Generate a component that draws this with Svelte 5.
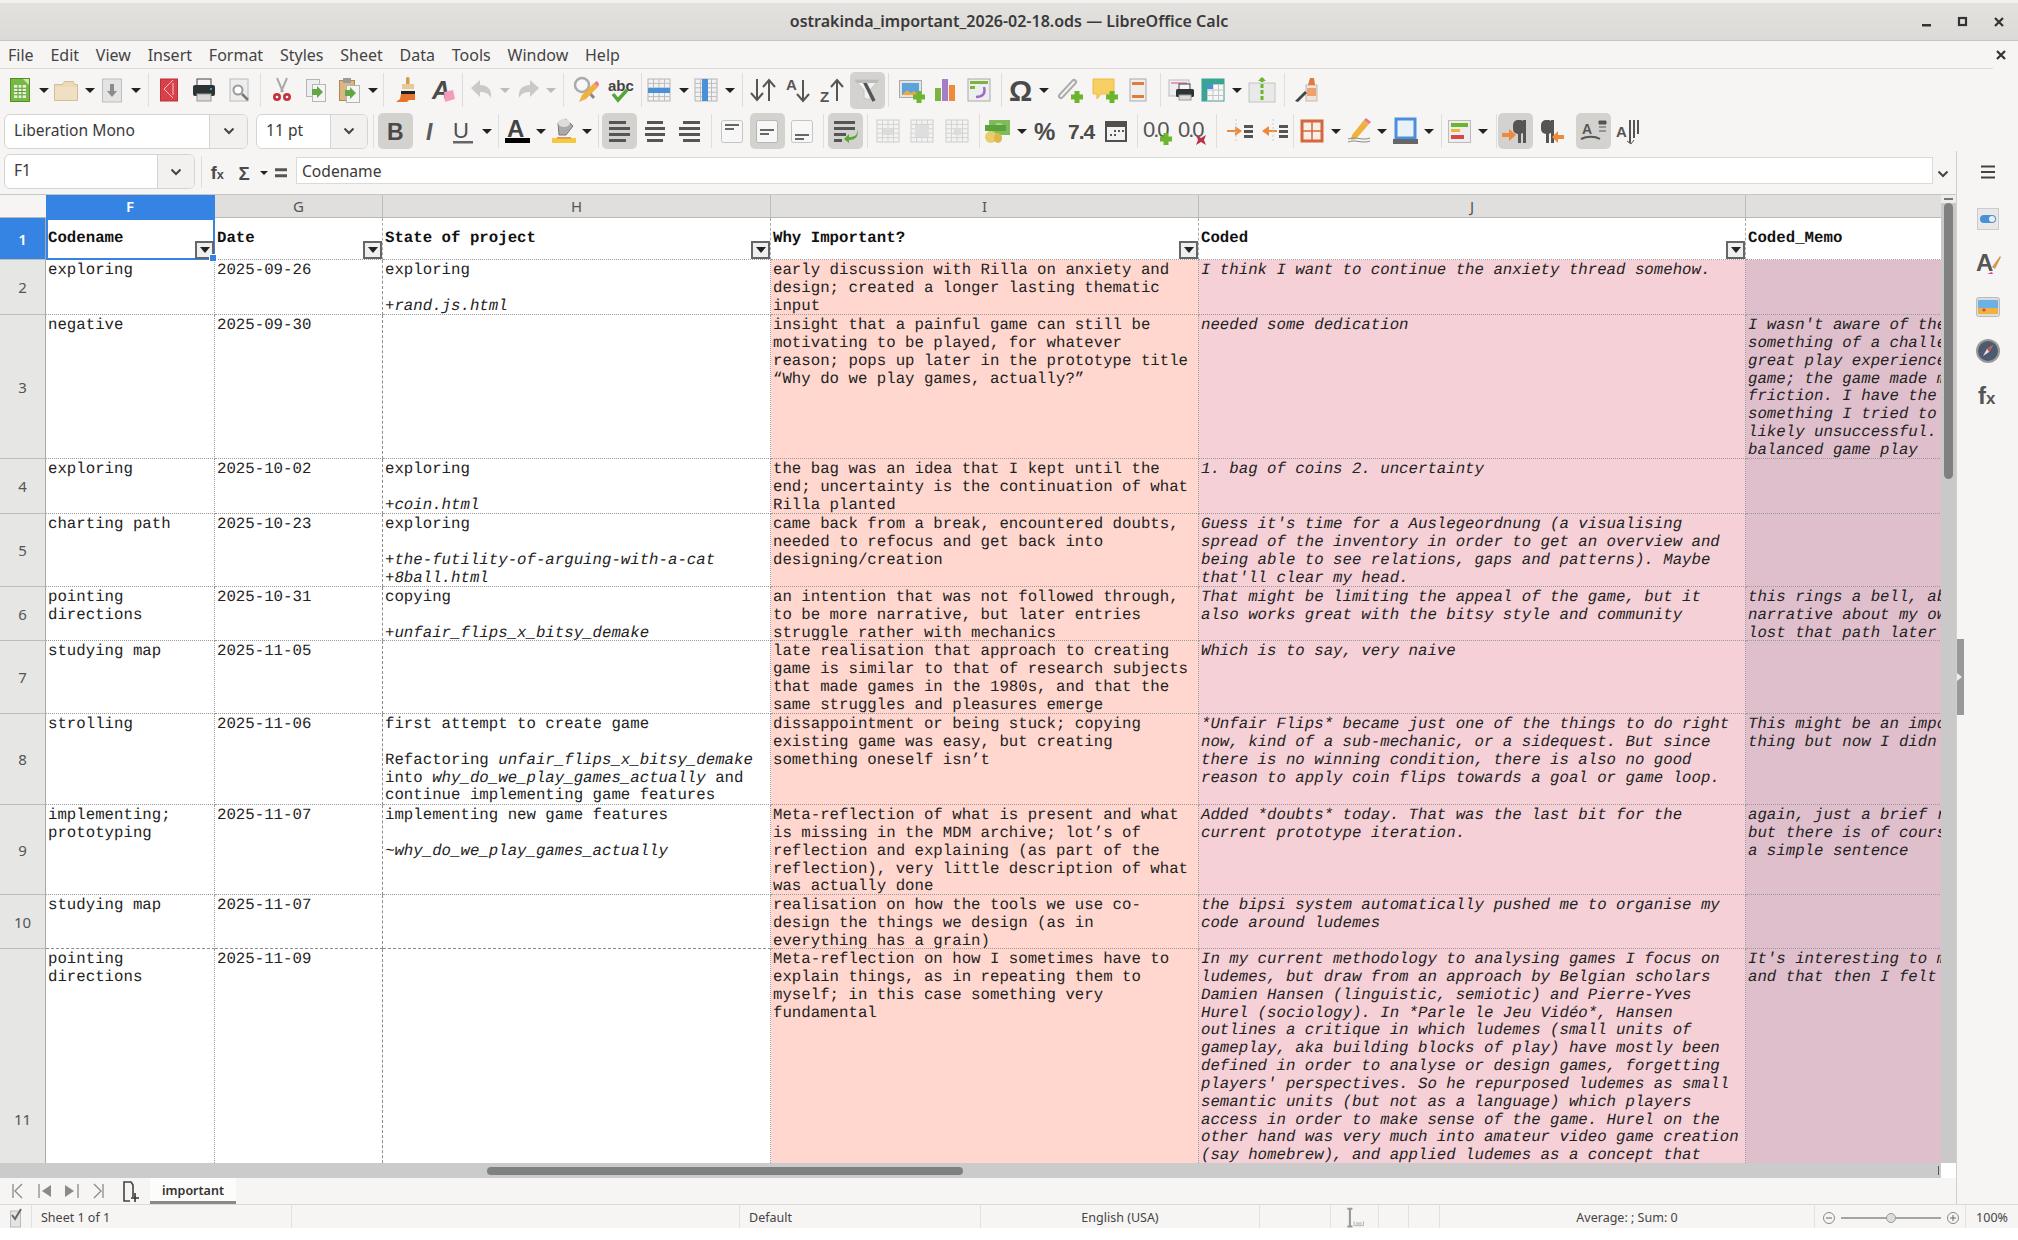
<script>
  // small helpers for the toolbar pictures
  const plus = (x, y, c = '#6bb52f') => `<path d="M${x - 2.5} ${y - 6}h5v3.5h3.5v5h-3.5v3.5h-5v-3.5h-3.5v-5h3.5z" fill="${c}"/>`;
  const cross = (x, y) => `<path d="M${x - 5} ${y - 5}l5 3 5-3-2 5 2 5-5-3-5 3 2-5z" fill="#b8324a"/>`;
  const lines = (x, y, w, h, nx, ny, c) => {
    let d = '';
    for (let i = 1; i < nx; i++) d += `M${x + (w * i) / nx} ${y}v${h}`;
    for (let i = 1; i < ny; i++) d += `M${x} ${y + (h * i) / ny}h${w}`;
    return `<path d="${d}" stroke="${c}" fill="none"/>`;
  };
  const gridbox = (x, y, w, h) => `<rect x="${x}" y="${y}" width="${w}" height="${h}" fill="#f2f2f2" stroke="#b5b5b5"/>` + lines(x, y, w, h, 4, 5, '#bdbdbd');
  const bars = (rows, c = '#555') => rows.map(([x, y, w, h]) => `<rect x="${x}" y="${y}" width="${w}" height="${h || 3}" fill="${c}"/>`).join('');
  const txt = (s, x, y, size, fill, extra = '') => `<text x="${x}" y="${y}" font-size="${size}" fill="${fill}" font-family="Liberation Sans, sans-serif" ${extra}>${s}</text>`;
  const faded = (s) => `<g opacity=".6">${s}</g>`;

  const icons = {
    new: `<rect x="6.5" y="4.5" width="19" height="23" fill="#78b944" stroke="#4e8f2a"/><rect x="10" y="11" width="12" height="13" fill="#e6f2d8"/>` + lines(10, 11, 12, 13, 3, 4, '#5c9a35') + `<path d="M19 5h6v6z" fill="#cfe6b5"/>`,
    open: `<path d="M4.5 10.5h8l2-3h9l1 3h3v16h-23z" fill="#edd9b8" stroke="#d3bd97"/><rect x="5" y="13" width="22" height="13" fill="#f1dfc3"/>`,
    save: `<rect x="6.5" y="5" width="19" height="23" fill="#e4e4e4" stroke="#bcbcbc"/><path d="M14 10h4v7h3l-5 6-5-6h3z" fill="#8b8b8b"/>`,
    pdf: `<rect x="7.5" y="5" width="17" height="22" fill="#d8414a" stroke="#b9333a"/><path d="M20 6l-9 9 9 9M20 9v12" stroke="#f3c8c8" fill="none"/>`,
    print: `<rect x="9" y="5" width="14" height="8" fill="#f5f5f5" stroke="#444"/><rect x="5" y="11" width="22" height="11" rx="2" fill="#2e3436"/><rect x="9" y="20" width="14" height="7" fill="#d9d9d9" stroke="#999"/><rect x="22" y="14" width="2" height="2" fill="#2ba3c7"/>`,
    preview: `<rect x="7" y="5" width="18" height="22" fill="#ededed" stroke="#bbb"/><circle cx="15" cy="16" r="4.5" fill="#fff" stroke="#999" stroke-width="2"/><path d="M19 20l6 6" stroke="#777" stroke-width="2.5"/>`,
    cut: `<path d="M11 4l6 14M21 4l-6 14" stroke="#aaa" stroke-width="2" fill="none"/><circle cx="11" cy="23" r="4" fill="#c4343f"/><circle cx="21" cy="23" r="4" fill="#c4343f"/><circle cx="11" cy="23" r="1.3" fill="#f6f5f4"/><circle cx="21" cy="23" r="1.3" fill="#f6f5f4"/>`,
    copy: `<rect x="6.5" y="5.5" width="13" height="17" fill="#eee" stroke="#b5b5b5"/><rect x="12.5" y="10.5" width="13" height="17" fill="#f5f5f5" stroke="#b5b5b5"/><path d="M12 15h5v-3l6 6-6 6v-3h-5z" fill="#62a744"/>`,
    paste: `<rect x="6.5" y="6.5" width="15" height="20" fill="#d9b77e" stroke="#a98a55"/><rect x="10" y="4" width="8" height="5" fill="#999"/><rect x="13.5" y="11.5" width="13" height="17" fill="#f5f5f5" stroke="#b5b5b5"/><path d="M12 16h5v-3l6 6-6 6v-3h-5z" fill="#62a744"/>`,
    brush: `<rect x="15" y="3" width="3.5" height="8" rx="1.5" fill="#d49a4c"/><rect x="11" y="10" width="12" height="5" fill="#e8c99a"/><rect x="10" y="15" width="14" height="5" fill="#222"/><path d="M10 20h14v6h-6l-2 2h-11l4-3z" fill="#e8732c"/><rect x="10" y="15" width="14" height="2" fill="#eee"/>`,
    clear: txt('A', 6, 25, 25, '#4a4a4a', 'font-weight="700" font-style="italic"') + `<path d="M18 18l9-2 2 9-10 3z" fill="#f39cc0"/>`,
    undo: `<path d="M5 14l9-8v5c8 0 12 5 11 13-2-4-5-6-11-6v5z" fill="#c9c9c9"/>`,
    redo: `<path d="M27 14l-9-8v5c-8 0-12 5-11 13 2-4 5-6 11-6v5z" fill="#c9c9c9"/>`,
    find: `<circle cx="13" cy="11" r="7" fill="#f7f7f7" stroke="#aaa" stroke-width="2.5"/><path d="M18 16l7 8" stroke="#888" stroke-width="3"/><path d="M10 28l3-7 12-12 4 4-12 12z" fill="#eeb23e"/><path d="M25 9l4 4 1-3-2-3z" fill="#e9748f"/>`,
    spell: txt('abc', 5, 17, 15, '#444', 'font-weight="700"') + `<path d="M10 20l5 6 9-10" stroke="#55a63a" stroke-width="3.5" fill="none"/>`,
    rows: gridbox(5, 5, 22, 22) + `<rect x="5" y="14" width="22" height="5" fill="#4a90d9"/>`,
    cols: gridbox(5, 5, 22, 22) + `<rect x="12" y="5" width="6" height="22" fill="#4a90d9"/>`,
    sort: `<path d="M10 5v20M4 19l6 7 6-7M22 27V7M16 13l6-7 6 7" stroke="#555" stroke-width="2" fill="none"/>`,
    asc: txt('A', 3, 16, 15, '#555', 'font-weight="700"') + `<path d="M20 6v20M14 20l6 7 6-7" stroke="#555" stroke-width="2" fill="none"/>`,
    desc: txt('Z', 3, 28, 15, '#555', 'font-weight="700"') + `<path d="M20 27V7M14 13l6-7 6 7" stroke="#555" stroke-width="2" fill="none"/>`,
    filter: `<path d="M4 6h24l-9 10v10l-6-2V16z" fill="#f1f1f1" stroke="#c4c2be"/><path d="M13 7l10 20" stroke="#555" stroke-width="3.5"/><path d="M4 6h24l-2 3H6z" fill="#bbb"/>`,
    image: `<rect x="4.5" y="6.5" width="22" height="17" fill="#e4e4e4" stroke="#aaa"/><rect x="7" y="9" width="17" height="12" fill="#5aa3dc"/><path d="M7 21l5-5 4 3 3-2 5 4z" fill="#f0a83c"/>` + plus(24, 23),
    chart: `<rect x="6" y="14" width="6" height="13" fill="#7cb342"/><rect x="13" y="5" width="6" height="22" fill="#a57dc9"/><rect x="20" y="11" width="6" height="16" fill="#ee8a3a"/>`,
    pivot: `<rect x="5" y="5" width="22" height="22" fill="#eee" stroke="#aaa"/><rect x="7" y="7" width="18" height="3" fill="#7cb342"/><rect x="7" y="12" width="5" height="3" fill="#7cb342"/><path d="M21 13c2 7-2 10-8 10" stroke="#9a6cc8" stroke-width="2.5" fill="none"/>`,
    omega: txt('Ω', 4, 27, 29, '#4a4a4a', 'font-weight="700"'),
    link: `<path d="M7 22L20 8" stroke="#aaa" stroke-width="6" stroke-linecap="round"/><path d="M7 22L20 8" stroke="#f2f2f2" stroke-width="2" stroke-linecap="round"/>` + plus(23, 23),
    comment: `<path d="M5 5h21v15h-13l-4 5v-5h-4z" fill="#f7cf63" stroke="#eebb45"/>` + plus(24, 23),
    header: `<rect x="8" y="5" width="16" height="22" fill="#eee" stroke="#aaa"/><rect x="10" y="8" width="12" height="3" fill="#e07b3a"/><rect x="10" y="21" width="12" height="3" fill="#e07b3a"/>`,
    printarea: `<rect x="2" y="6" width="20" height="16" fill="#eee" stroke="#bbb"/><path d="M4 9h16" stroke="#d48" /><rect x="12" y="10" width="11" height="6" fill="#f5f5f5" stroke="#444"/><rect x="9" y="15" width="18" height="8" rx="1.5" fill="#2e3436"/><rect x="12" y="21" width="12" height="5" fill="#ddd" stroke="#999"/>`,
    freeze: `<rect x="5" y="5" width="22" height="22" fill="#f7f7f7" stroke="#3aa08e"/>` + lines(5, 5, 22, 22, 4, 4, '#c4c4c4') + `<rect x="5" y="5" width="22" height="5" fill="#38a594"/><rect x="5" y="5" width="5" height="22" fill="#38a594"/><rect x="10" y="10" width="6" height="5" fill="#4a90d9"/>`,
    split: `<rect x="3" y="9" width="26" height="19" fill="#e9e9e9" stroke="#c4c4c4"/><path d="M16 4v24" stroke="#6bb52f" stroke-width="3" stroke-dasharray="4 2"/><path d="M16 3l4 4h-8z" fill="#6bb52f"/>`,
    draw: `<rect x="15" y="11" width="11" height="16" fill="#f2e3d6" stroke="#bbb"/><rect x="16" y="14" width="9" height="8" fill="#eea16a"/><path d="M17 11l2-7h4l1 7z" fill="#e5773a"/><path d="M4 27l10-10 2 2-9 9z" fill="#444"/>`,
    bold: txt('B', 8, 25, 23, '#4a4a4a', 'font-weight="700"'),
    italic: txt('I', 12, 25, 23, '#5a5a5a', 'font-weight="700" font-style="italic" font-family="Liberation Serif"'),
    underline: txt('U', 6, 23, 22, '#4f4f4f') + `<rect x="6" y="26" width="20" height="2.5" fill="#666"/>`,
    fontcolor: txt('A', 6, 22, 24, '#444', 'font-weight="700"') + `<rect x="4" y="23" width="25" height="5" fill="#000"/>`,
    highlight: `<rect x="5" y="23" width="24" height="5" fill="#f3c93d"/><path d="M11 8l8-4 7 7-7 9h-7z" fill="#aaa" stroke="#777"/><ellipse cx="17" cy="8" rx="6" ry="4" fill="#ddd"/><path d="M10 22h14v2H10z" fill="#e8985a"/>`,
    left: bars([[6, 6, 17], [6, 12, 21], [6, 18, 21], [6, 24, 17]]),
    center: bars([[8, 6, 16], [6, 12, 20], [6, 18, 20], [8, 24, 16]]),
    right: bars([[9, 6, 17], [5, 12, 21], [5, 18, 21], [9, 24, 17]]),
    vtop: `<rect x="5.5" y="5.5" width="21" height="22" rx="2" fill="#f7f7f7" stroke="#c4c4c4"/>` + bars([[9, 9, 14, 2], [9, 13, 9, 2]], '#666'),
    vmid: `<rect x="5.5" y="5.5" width="21" height="22" rx="2" fill="#f7f7f7" stroke="#b5b5b5"/>` + bars([[9, 14, 14, 2], [9, 18, 9, 2]], '#666'),
    vbot: `<rect x="5.5" y="5.5" width="21" height="22" rx="2" fill="#f7f7f7" stroke="#c4c4c4"/>` + bars([[9, 19, 14, 2], [9, 23, 9, 2]], '#666'),
    wrap: bars([[5, 6, 21], [5, 12, 21], [5, 18, 12], [5, 24, 8]]) + `<path d="M28 14c1 6-2 8-8 8v-3l-5 5 5 4v-3c8 0 10-5 8-11z" fill="#5aa83a"/>`,
    merge1: faded(gridbox(5, 5, 22, 22) + `<rect x="11" y="13" width="10" height="7" fill="#ccc"/>`),
    merge2: faded(gridbox(5, 5, 22, 22) + `<rect x="9" y="10" width="14" height="12" fill="#d0d0d0"/>`),
    merge3: faded(gridbox(5, 5, 22, 22) + `<rect x="13" y="13" width="7" height="7" fill="#ccc"/>`),
    money: `<rect x="8" y="5" width="21" height="15" fill="#7dbb5c"/><circle cx="18" cy="12" r="4" fill="#a8d98c"/><rect x="4" y="10" width="21" height="6" fill="#5aa33a"/><ellipse cx="10" cy="22" rx="6" ry="6" fill="#e8cd6c"/><ellipse cx="17" cy="23" rx="4" ry="5" fill="#d9b94d"/>`,
    percent: txt('%', 3, 25, 24, '#4a4a4a', 'font-weight="700"'),
    number: txt('7.4', 2, 24, 21, '#4a4a4a', 'font-weight="700" letter-spacing="-1"'),
    date: `<rect x="5" y="6" width="22" height="21" fill="#4f4f4f"/><rect x="7" y="12" width="18" height="13" fill="#f2f2f2"/><path d="M14 15h2v2h-2zM18 15h2v2h-2zM22 15h2v2h-2zM10 19h2v2h-2zM14 19h2v2h-2z" fill="#555"/>`,
    decadd: txt('0.0', 1, 22, 22, '#555', 'letter-spacing="-2"') + plus(24, 24),
    decdel: txt('0.0', 1, 22, 22, '#555', 'letter-spacing="-2"') + cross(24, 25),
    indent: `<path d="M5 15h8v-4l7 5-7 5v-4H5z" fill="#ee8a3a"/>` + bars([[22, 10, 9], [22, 15, 9], [22, 20, 9]]) + `<path d="M14 4v24" stroke="#ccc" stroke-dasharray="2 2"/>`,
    outdent: `<path d="M20 15h-8v-4l-7 5 7 5v-4h8z" fill="#ee8a3a"/>` + bars([[22, 10, 9], [22, 15, 9], [22, 20, 9]]) + `<path d="M16 4v24" stroke="#ccc" stroke-dasharray="2 2"/>`,
    borders: `<rect x="6" y="6" width="20" height="20" fill="#f8efe8" stroke="#d4683a" stroke-width="3"/><path d="M16 6v20M6 16h20" stroke="#d4683a" stroke-width="1.5"/>`,
    pencil: `<path d="M9 20L21 5l5 4-13 15-5 1z" fill="#eeb23e"/><path d="M21 5l2-2 5 4-2 2z" fill="#e9748f"/><path d="M5 24c8-3 14 2 22-1M5 27c8-3 14 2 22-1" stroke="#888" fill="none"/>`,
    bordercolor: `<rect x="7" y="4" width="19" height="19" fill="#eaf1fa" stroke="#4a8fdb" stroke-width="3"/><rect x="4" y="24" width="25" height="5" fill="#666"/>`,
    cond: `<rect x="5.5" y="5.5" width="22" height="22" fill="#eee" stroke="#bbb"/><rect x="8" y="8" width="17" height="4" fill="#6bb52f"/><rect x="8" y="14" width="9" height="3" fill="#eeb23e"/><rect x="8" y="20" width="13" height="4" fill="#d4484a"/>`,
    ltr: `<rect x="14" y="5" width="12" height="14" rx="5" fill="#555"/><rect x="19" y="5" width="3" height="23" fill="#555"/><rect x="24" y="5" width="3" height="23" fill="#555"/><path d="M3 18h7v-4l7 6-7 6v-4H3z" fill="#ee8a3a"/>`,
    rtl: `<rect x="6" y="5" width="12" height="14" rx="5" fill="#555"/><rect x="11" y="5" width="3" height="23" fill="#555"/><rect x="16" y="5" width="3" height="23" fill="#555"/><path d="M29 20h-6v-4l-6 6 6 6v-4h6z" fill="#ee8a3a"/>`,
    textv: txt('A', 5, 19, 14, '#555', 'font-weight="700"') + `<path d="M4 24c6-3 14-3 19 0" stroke="#555" stroke-width="2" fill="none"/><path d="M22 6h7v3h-7zM22 12h7M22 16h7" stroke="#555" fill="#555"/>`,
    texth: txt('A', 3, 22, 15, '#555', 'font-weight="700"') + `<path d="M17 5v23M21 5v18M25 5v14" stroke="#555" stroke-width="2"/><path d="M14 26l4 3 3-4" stroke="#555" fill="none"/>`,
    fx: txt('f<tspan font-size="17">x</tspan>', 5, 25, 24, '#4a4a4a', 'font-weight="700"'),
    sum: txt('Σ', 6, 26, 25, '#4a4a4a', 'font-weight="700"'),
    equal: bars([[8, 11, 16, 4], [8, 19, 16, 4]]),
    toggle: `<rect x="5.5" y="5.5" width="21" height="21" fill="#e8e8e8" stroke="#ccc"/><rect x="8" y="12" width="16" height="8" rx="4" fill="#4a90d9"/><circle cx="20" cy="16" r="3" fill="#eee"/>`,
    styles: txt('A', 4, 24, 24, '#555', 'font-weight="700"') + `<path d="M20 20l8-11 1 1-6 12z" fill="#d49a4c"/><path d="M15 27l5-2 1 2z" fill="#d048a0"/>`,
    gallery: `<rect x="4.5" y="6.5" width="23" height="19" rx="2" fill="#dcdcdc" stroke="#bbb"/><rect x="6" y="9" width="20" height="8" fill="#6bb1e3"/><rect x="6" y="17" width="20" height="6" fill="#f0b042"/><circle cx="12" cy="19" r="1.6" fill="#d4484a"/>`,
    navigator: `<circle cx="16" cy="16" r="11" fill="#4e5a6e" stroke="#999" stroke-width="2"/><path d="M11 21l4-7 6-4-4 7z" fill="#e8e8e8"/><path d="M15 14l6-4-4 7z" fill="#d4484a"/>`,
    functions: txt('f<tspan font-size="17">x</tspan>', 6, 25, 24, '#555', 'font-weight="700"')
  };

  const gap = (items, start) => {
    let end = start;
    return items.map(([name, c, on]) => {
      const w = name === 'arrow' || name === 'arrowoff' ? 10 : name === 'sep' ? 1 : 35;
      const m = c - w / 2 - end;
      end = c + w / 2;
      return { name, m, w, on };
    });
  };

  const row1 = gap([
    ['new', 20], ['arrow', 44], ['open', 66], ['arrow', 90], ['save', 112], ['arrow', 136], ['sep', 148],
    ['pdf', 169], ['print', 204], ['preview', 239], ['sep', 260], ['cut', 282], ['copy', 316], ['paste', 349], ['arrow', 373], ['sep', 383],
    ['brush', 407], ['clear', 442], ['sep', 462], ['undo', 482], ['arrowoff', 505], ['redo', 528], ['arrowoff', 551], ['sep', 563],
    ['find', 585], ['spell', 619], ['sep', 641], ['rows', 659], ['arrow', 684], ['cols', 706], ['arrow', 730], ['sep', 742],
    ['sort', 763], ['asc', 799], ['desc', 833], ['filter', 867, true], ['sep', 888], ['image', 911], ['chart', 945], ['pivot', 979], ['sep', 1001],
    ['omega', 1021], ['arrow', 1044], ['link', 1070], ['comment', 1104], ['header', 1138], ['sep', 1160],
    ['printarea', 1183], ['freeze', 1213], ['arrow', 1237], ['split', 1262], ['sep', 1284], ['draw', 1307]
  ], 0);

  const row2 = gap([
    ['sep', 373], ['bold', 395, true], ['italic', 430], ['underline', 463], ['arrow', 487], ['sep', 498],
    ['fontcolor', 517], ['arrow', 541], ['highlight', 563], ['arrow', 587], ['sep', 598],
    ['left', 619, true], ['center', 655], ['right', 690], ['sep', 711], ['vtop', 732], ['vmid', 767, true], ['vbot', 802], ['sep', 823],
    ['wrap', 845, true], ['sep', 867], ['merge1', 888], ['merge2', 922], ['merge3', 957], ['sep', 979],
    ['money', 997], ['arrow', 1022], ['percent', 1047], ['number', 1082], ['date', 1116], ['sep', 1137],
    ['decadd', 1158], ['decdel', 1193], ['sep', 1216], ['indent', 1238], ['outdent', 1273], ['sep', 1293],
    ['borders', 1312], ['arrow', 1336], ['pencil', 1359], ['arrow', 1382], ['bordercolor', 1405], ['arrow', 1429], ['sep', 1441],
    ['cond', 1459], ['arrow', 1483], ['sep', 1496], ['ltr', 1515, true], ['rtl', 1551], ['textv', 1593, true], ['texth', 1629]
  ], 368);

  const menus = ['File', 'Edit', 'View', 'Insert', 'Format', 'Styles', 'Sheet', 'Data', 'Tools', 'Window', 'Help'];
  const sideIcons = ['toggle', 'styles', 'gallery', 'navigator', 'functions'];

  const columns = [
    { name: 'F', title: 'Codename', filter: true, sel: true },
    { name: 'G', title: 'Date', filter: true },
    { name: 'H', title: 'State of project', filter: true },
    { name: 'I', title: 'Why Important?', filter: true },
    { name: 'J', title: 'Coded', filter: true },
    { name: '', title: 'Coded_Memo' }
  ];

  const rows = [
    { n: 2, h: 55, f: 'exploring', g: '2025-09-26', s: 'exploring\n\n<i>+rand.js.html</i>',
      i: 'early discussion with Rilla on anxiety and\ndesign; created a longer lasting thematic\ninput',
      j: 'I think I want to continue the anxiety thread somehow.', k: '' },
    { n: 3, h: 144, f: 'negative', g: '2025-09-30', s: '',
      i: 'insight that a painful game can still be\nmotivating to be played, for whatever\nreason; pops up later in the prototype title\n“Why do we play games, actually?”',
      j: 'needed some dedication',
      k: "I wasn't aware of the extent\nsomething of a challenge\ngreat play experience\ngame; the game made me\nfriction. I have the\nsomething I tried to\nlikely unsuccessful.\nbalanced game play" },
    { n: 4, h: 55, f: 'exploring', g: '2025-10-02', s: 'exploring\n\n<i>+coin.html</i>',
      i: 'the bag was an idea that I kept until the\nend; uncertainty is the continuation of what\nRilla planted',
      j: '1. bag of coins 2. uncertainty', k: '' },
    { n: 5, h: 73, f: 'charting path', g: '2025-10-23', s: 'exploring\n\n<i>+the-futility-of-arguing-with-a-cat</i>\n<i>+8ball.html</i>',
      i: 'came back from a break, encountered doubts,\nneeded to refocus and get back into\ndesigning/creation',
      j: "Guess it's time for a Auslegeordnung (a visualising\nspread of the inventory in order to get an overview and\nbeing able to see relations, gaps and patterns). Maybe\nthat'll clear my head.", k: '' },
    { n: 6, h: 54, f: 'pointing\ndirections', g: '2025-10-31', s: 'copying\n\n<i>+unfair_flips_x_bitsy_demake</i>',
      i: 'an intention that was not followed through,\nto be more narrative, but later entries\nstruggle rather with mechanics',
      j: 'That might be limiting the appeal of the game, but it\nalso works great with the bitsy style and community',
      k: 'this rings a bell, about\nnarrative about my own\nlost that path later' },
    { n: 7, h: 73, f: 'studying map', g: '2025-11-05', s: '',
      i: 'late realisation that approach to creating\ngame is similar to that of research subjects\nthat made games in the 1980s, and that the\nsame struggles and pleasures emerge',
      j: 'Which is to say, very naive', k: '' },
    { n: 8, h: 91, f: 'strolling', g: '2025-11-06', s: 'first attempt to create game\n\nRefactoring <i>unfair_flips_x_bitsy_demake</i>\ninto <i>why_do_we_play_games_actually</i> and\ncontinue implementing game features',
      i: 'dissappointment or being stuck; copying\nexisting game was easy, but creating\nsomething oneself isn’t',
      j: '*Unfair Flips* became just one of the things to do right\nnow, kind of a sub-mechanic, or a sidequest. But since\nthere is no winning condition, there is also no good\nreason to apply coin flips towards a goal or game loop.',
      k: "This might be an important\nthing but now I didn't" },
    { n: 9, h: 90, f: 'implementing;\nprototyping', g: '2025-11-07', s: 'implementing new game features\n\n<i>~why_do_we_play_games_actually</i>',
      i: 'Meta-reflection of what is present and what\nis missing in the MDM archive; lot’s of\nreflection and explaining (as part of the\nreflection), very little description of what\nwas actually done',
      j: 'Added *doubts* today. That was the last bit for the\ncurrent prototype iteration.',
      k: 'again, just a brief reflection\nbut there is of course\na simple sentence' },
    { n: 10, h: 54, f: 'studying map', g: '2025-11-07', s: '', dash: true,
      i: 'realisation on how the tools we use co-\ndesign the things we design (as in\neverything has a grain)',
      j: 'the bipsi system automatically pushed me to organise my\ncode around ludemes', k: '' },
    { n: 11, h: 340, f: 'pointing\ndirections', g: '2025-11-09', s: '',
      i: 'Meta-reflection on how I sometimes have to\nexplain things, as in repeating them to\nmyself; in this case something very\nfundamental',
      j: "In my current methodology to analysing games I focus on\nludemes, but draw from an approach by Belgian scholars\nDamien Hansen (linguistic, semiotic) and Pierre-Yves\nHurel (sociology). In *Parle le Jeu Vidéo*, Hansen\noutlines a critique in which ludemes (small units of\ngameplay, aka building blocks of play) have mostly been\ndefined in order to analyse or design games, forgetting\nplayers' perspectives. So he repurposed ludemes as small\nsemantic units (but not as a language) which players\naccess in order to make sense of the game. Hurel on the\nother hand was very much into amateur video game creation\n(say homebrew), and applied ludemes as a concept that",
      k: "It's interesting to me\nand that then I felt" }
  ];
  const rowTracks = '23px 42px ' + rows.map((r) => r.h + 'px').join(' ');
</script>

{#snippet icon(name, size = 32)}
  <svg class="ic" width={size} height={size} viewBox="0 0 32 32">{@html icons[name]}</svg>
{/snippet}

{#snippet chevron()}
  <svg width="12" height="8" viewBox="0 0 12 8"><path d="M1.5 1.5L6 6l4.5-4.5" stroke="#444" stroke-width="2" fill="none"/></svg>
{/snippet}

{#snippet toolItems(items)}
  {#each items as it}
    {#if it.name === 'arrow' || it.name === 'arrowoff'}
      <span class="arrow" class:off={it.name === 'arrowoff'} style="margin-left:{it.m}px"></span>
    {:else if it.name === 'sep'}
      <span class="sep" style="margin-left:{it.m}px"></span>
    {:else}
      <span class="tool" class:on={it.on} style="margin-left:{it.m}px">{@render icon(it.name, 32)}</span>
    {/if}
  {/each}
{/snippet}

<div class="app">
  <div class="strip"></div>
  <header class="titlebar">
    <div></div>
    <div class="title">ostrakinda_important_2026-02-18.ods — LibreOffice Calc</div>
    <div class="winbtns">
      <svg width="12" height="12" viewBox="0 0 12 12"><rect x="1" y="8" width="9" height="2.5" fill="#333"/></svg>
      <svg width="12" height="12" viewBox="0 0 12 12"><rect x="2" y="2" width="7" height="7" fill="none" stroke="#333" stroke-width="2.2"/></svg>
      <svg width="12" height="12" viewBox="0 0 12 12"><path d="M2 2l8 8M10 2l-8 8" stroke="#333" stroke-width="2.2"/></svg>
    </div>
  </header>

  <nav class="menubar">
    <div class="menus">
      {#each menus as m}<span>{m}</span>{/each}
    </div>
    <svg class="menuclose" width="12" height="12" viewBox="0 0 12 12"><path d="M2 2l8 8M10 2l-8 8" stroke="#333" stroke-width="2.2"/></svg>
  </nav>

  <div class="toolbar one">{@render toolItems(row1)}</div>

  <div class="toolbar two">
    <div class="combo font"><span class="val">Liberation Mono</span><span class="drop">{@render chevron()}</span></div>
    <div class="combo size"><span class="val">11 pt</span><span class="drop">{@render chevron()}</span></div>
    {@render toolItems(row2)}
  </div>

  <div class="middle">
    <div class="sheet">
      <div class="formula">
        <div class="combo name"><span class="val">F1</span><span class="drop">{@render chevron()}</span></div>
        <span class="fsep"></span>
        <span class="ftool">{@render icon('fx', 24)}</span>
        <span class="ftool sum">{@render icon('sum', 24)}</span>
        <span class="arrow small"></span>
        <span class="ftool eq">{@render icon('equal', 24)}</span>
        <div class="input">Codename</div>
        <span class="fdrop">{@render chevron()}</span>
      </div>

      <div class="gridwrap">
        <div class="gridclip">
          <div class="grid" style="grid-template-rows:{rowTracks}">
            <div class="corner"></div>
            {#each columns as c}
              <div class="colhead" class:sel={c.sel}>{c.name}</div>
            {/each}

            <div class="rowhead sel">1</div>
            {#each columns as c}
              <div class="cell head" class:cursor={c.sel}>
                {c.title}
                {#if c.filter}
                  <span class="fbtn"><span></span></span>
                {/if}
                {#if c.sel}<span class="handle"></span>{/if}
              </div>
            {/each}

            {#each rows as r}
              <div class="rowhead">{r.n}</div>
              <div class="cell" class:dash={r.dash}>{r.f}</div>
              <div class="cell vdash" class:dash={r.dash}>{r.g}</div>
              <div class="cell" class:dash={r.dash}>{@html r.s}</div>
              <div class="cell salmon">{r.i}</div>
              <div class="cell pink it">{r.j}</div>
              <div class="cell mauve it">{r.k}</div>
            {/each}
          </div>
        </div>
        <div class="vscroll">
          <div class="vtopcap"><span></span></div>
          <div class="vtrack"><div class="vthumb"></div></div>
        </div>
      </div>

      <div class="hscroll"><div class="hthumb"></div><span class="htick"></span></div>

      <div class="tabs">
        <svg class="tabnav" width="100" height="20" viewBox="0 0 100 20">
          <path d="M9 3v14M18 3l-7 7 7 7" stroke="#8a8a8a" stroke-width="1.3" fill="none"/>
          <path d="M35 3v14" stroke="#8a8a8a" stroke-width="1.3"/><path d="M47 4l-9 6 9 6z" fill="#8a8a8a"/>
          <path d="M61 4l9 6-9 6z" fill="#8a8a8a"/><path d="M74 3v14" stroke="#8a8a8a" stroke-width="1.3"/>
          <path d="M90 3l7 7-7 7M99 3v14" stroke="#8a8a8a" stroke-width="1.3" fill="none"/>
        </svg>
        <svg class="newtab" width="20" height="24" viewBox="0 0 20 24">
          <path d="M12 17v-12l-2-3H3v19h6" stroke="#444" stroke-width="1.6" fill="none"/>
          <path d="M14 13v9M10 18h8" stroke="#333" stroke-width="1.6"/>
        </svg>
        <div class="tab">important</div>
      </div>
    </div>

    <aside class="sidebar">
      <svg class="burger" width="18" height="16" viewBox="0 0 18 16"><path d="M2 2.5h14M2 8h14M2 13.5h14" stroke="#444" stroke-width="2"/></svg>
      {#each sideIcons as s}
        {@render icon(s, 32)}
      {/each}
      <div class="grip"><span></span></div>
    </aside>
  </div>

  <footer class="status">
    <div class="st mid" style="width:32px">
      <svg width="14" height="20" viewBox="0 0 14 20"><rect x="1.5" y="3" width="10" height="16" fill="#e4e4e4" stroke="#bbb"/><path d="M3 7l3 4 6-10" stroke="#666" stroke-width="2" fill="none"/></svg>
    </div>
    <div class="st pad" style="width:260px">Sheet 1 of 1</div>
    <div class="st" style="width:448px"></div>
    <div class="st pad" style="width:241px">Default</div>
    <div class="st mid" style="width:279px">English (USA)</div>
    <div class="st" style="width:71px"></div>
    <div class="st mid" style="width:48px">
      <svg width="26" height="22" viewBox="0 0 26 26"><path d="M7 2v21M4 2h6M4 23h6" stroke="#999" stroke-width="2.5" fill="none"/><path d="M12 17v5h11v-5" stroke="#aaa" fill="none"/><rect x="14" y="18" width="7" height="3" fill="#ccc"/></svg>
    </div>
    <div class="st" style="width:30px"></div>
    <div class="st" style="width:31px"></div>
    <div class="st mid" style="width:375px">Average: ; Sum: 0</div>
    <div class="st zoom" style="width:151px">
      <svg width="150" height="20" viewBox="0 0 150 20">
        <circle cx="14" cy="10" r="5.5" fill="none" stroke="#888"/><path d="M11 10h6" stroke="#666"/>
        <path d="M26 10h100" stroke="#888" stroke-width="1.4"/>
        <circle cx="76" cy="10" r="4.5" fill="#ddd" stroke="#999"/>
        <circle cx="138" cy="10" r="5.5" fill="none" stroke="#888"/><path d="M135 10h6M138 7v6" stroke="#666"/>
      </svg>
    </div>
    <div class="st mid last">100%</div>
  </footer>
</div>

<style>
  :global(body) { margin: 0; background: #fff; }
  .app { width: 2018px; height: 1240px; display: flex; flex-direction: column; overflow: hidden; font-family: "Noto Sans", sans-serif; color: #333; background: #fff; }
  .strip { height: 3px; background: #f2f1ef; }
  .titlebar { height: 37px; display: grid; grid-template-columns: 1fr auto 1fr; align-items: center; background: linear-gradient(#e3e2df, #dcdad7); border-bottom: 1px solid #c9c7c3; box-sizing: content-box; }
  .title { font-size: 16px; font-weight: 600; color: #3a3a3a; margin-top: -2px; }
  .winbtns { display: flex; justify-content: flex-end; gap: 24px; padding-right: 13px; }
  .menubar { height: 28px; flex: none; display: flex; align-items: center; background: #f6f5f4; position: relative; }
  .menus { width: 1993px; height: 28px; display: flex; align-items: center; gap: 16.8px; padding-left: 8px; box-sizing: border-box; font-size: 16px; border-bottom: 1px solid #dcdbd9; color: #444; }
  .menuclose { margin-left: 2px; }
  .toolbar { display: flex; align-items: center; background: #f6f5f4; flex: none; }
  .toolbar.one { height: 42px; }
  .toolbar.two { height: 40px; }
  .tool { width: 35px; height: 36px; display: flex; align-items: center; justify-content: center; flex: none; border-radius: 5px; }
  .tool.on { background: #d4d2cf; }
  .toolbar.one .tool.on { height: 37px; }
  .arrow { width: 0; height: 0; flex: none; box-sizing: content-box; border-left: 5px solid transparent; border-right: 5px solid transparent; border-top: 5px solid #222; }
  .arrow.off { border-top-color: #bbb; }
  .sep { width: 1px; height: 34px; background: #dfdedc; flex: none; }
  .combo { height: 35px; display: flex; align-items: center; background: #fff; border: 1px solid #d5d4d2; border-radius: 6px; box-sizing: border-box; flex: none; overflow: hidden; font-size: 15.6px; color: #3a3a3a; }
  .combo .val { flex: 1; padding-left: 9px; white-space: nowrap; margin-top: -3px; }
  .drop { width: 37px; height: 100%; display: flex; align-items: center; justify-content: center; background: #f2f1ef; border-left: 1px solid #d5d4d2; }
  .combo.font { width: 244px; margin-left: 4px; }
  .combo.size { width: 112px; margin-left: 8px; }
  .combo.size .drop { width: 36px; }
  .middle { flex: 1; display: flex; min-height: 0; }
  .sheet { width: 1956px; display: flex; flex-direction: column; border-right: 1px solid #cfcfcf; box-sizing: content-box; flex: none; }
  .formula { height: 44px; flex: none; display: flex; align-items: center; background: #f6f5f4; border-bottom: 1px solid #c6c6c4; box-sizing: border-box; padding-top: 2px; }
  .combo.name { width: 191px; margin-left: 4px; margin-bottom: 4px; }
  .combo.name .drop { width: 36px; }
  .fsep { width: 1px; height: 32px; background: #dfdedc; margin: 0 0 4px 6px; }
  .ftool { display: flex; margin-left: 5px; margin-bottom: 4px; }
  .ftool.sum { margin-left: 3px; }
  .ftool.eq { margin-left: 1px; }
  .arrow.small { margin: 0 0 2px 2px; border-left-width: 4px; border-right-width: 4px; border-top-width: 4px; }
  .input { width: 1637px; height: 27px; margin: 0 0 6px 3px; box-sizing: border-box; display: flex; align-items: center; padding-left: 5px; background: #fff; border: 1px solid #dbdad8; font-size: 15.6px; color: #3a3a3a; }
  .fdrop { margin-left: 4px; display: flex; }
  .gridwrap { flex: 1; display: flex; min-height: 0; }
  .gridclip { width: 1941px; overflow: hidden; background: #fff; }
  .grid { display: grid; grid-template-columns: 46px 169px 168px 388px 428px 547px 600px; width: 2346px; }
  .corner { background: #f6f5f4; border-bottom: 1px solid #b9b9b7; box-sizing: border-box; }
  .colhead { box-sizing: border-box; display: flex; align-items: center; justify-content: center; background: #e0dfdd; border-right: 1px solid #bdbdbb; border-bottom: 1px solid #b9b9b7; font-size: 15px; color: #555; }
  .colhead.sel { background: #3584e4; color: #fff; font-weight: 600; border-color: #3584e4; }
  .rowhead { box-sizing: border-box; display: flex; align-items: center; justify-content: center; background: #e6e6e4; border-right: 1px solid #a9a9a9; border-bottom: 1px solid #bdbdbb; font-size: 15px; color: #555; }
  .rowhead.sel { background: #3584e4; color: #fff; font-weight: 600; }
  .cell { position: relative; box-sizing: border-box; padding: 2px 0 0 2px; font-family: "Liberation Mono", monospace; font-size: 15.72px; line-height: 17.85px; white-space: pre; overflow: hidden; color: #222; text-rendering: geometricPrecision; background: #fff; border-right: 1px dotted #9a9a9a; border-bottom: 1px dotted #9a9a9a; }
  .cell.vdash { border-right: 1px dashed #8c8c8c; }
  .cell.dash { border-bottom: 1px dashed #8c8c8c; }
  .cell.head { font-weight: 700; padding-top: 12px; color: #111; overflow: visible; border-right: 1px dashed #aaa; white-space: nowrap; }
  .cell.cursor { outline: 2px solid #3584e4; outline-offset: -2px; z-index: 2; }
  .salmon { background: #ffd7ce; }
  .pink { background: #f5d0d6; }
  .mauve { background: #e0bfcc; }
  .it { font-style: italic; }
  .fbtn { position: absolute; right: 0; bottom: 0; width: 19px; height: 18px; box-sizing: border-box; background: #efefef; border: 2px solid #666; display: flex; align-items: center; justify-content: center; }
  .fbtn span { width: 0; height: 0; border-left: 5px solid transparent; border-right: 5px solid transparent; border-top: 6px solid #222; }
  .handle { position: absolute; right: -3px; bottom: -3px; width: 6px; height: 6px; background: #3584e4; border: 1px solid #fff; z-index: 3; }
  .vscroll { width: 15px; flex: none; display: flex; flex-direction: column; background: #c9c9c9; overflow: hidden; }
  .vtopcap { height: 8px; flex: none; background: #ececea; display: flex; justify-content: center; align-items: center; }
  .vtopcap span { width: 9px; height: 2px; background: #777; }
  .vtrack { flex: 1; padding: 0 3px; }
  .vthumb { height: 276px; background: #808080; border-radius: 5px; }
  .hscroll { height: 15px; width: 1941px; flex: none; background: #cbcbcb; position: relative; display: flex; align-items: center; }
  .hthumb { width: 476px; height: 8px; margin-left: 487px; background: #7f8080; border-radius: 4px; }
  .htick { position: absolute; left: 1938px; top: 3px; width: 1px; height: 9px; background: #555; }
  .tabs { height: 26px; flex: none; display: flex; align-items: flex-start; background: #f6f5f4; }
  .tabnav { margin: 3px 0 0 4px; }
  .newtab { margin: 2px 0 0 17px; }
  .tab { width: 86px; height: 26px; margin-left: 9px; box-sizing: border-box; display: flex; align-items: center; justify-content: center; padding-top: 1px; background: #fcfcfb; border-bottom: 3px solid #8a8a8a; font-size: 12.5px; font-weight: 600; color: #333; }
  .sidebar { flex: 1; position: relative; display: flex; flex-direction: column; align-items: center; gap: 12px; padding-top: 13px; background: #f6f5f4; box-sizing: border-box; }
  .burger { margin-bottom: 11px; }
  .grip { position: absolute; left: 0; top: 488px; width: 7px; height: 76px; background: #999; display: flex; align-items: center; }
  .grip span { width: 0; height: 0; border-top: 4px solid transparent; border-bottom: 4px solid transparent; border-left: 5px solid #eee; }
  .status { height: 24px; flex: none; display: flex; margin-bottom: 12px; background: #f6f5f4; border-top: 1px solid #dbdad8; box-sizing: border-box; font-size: 12.5px; color: #444; }
  .st { height: 100%; box-sizing: border-box; display: flex; align-items: center; border-right: 1px solid #e2e1df; flex: none; white-space: nowrap; overflow: hidden; padding-top: 2px; }
  .st.pad { padding-left: 9px; }
  .st.mid { justify-content: center; }
  .st.last { flex: 1; border-right: 0; }
</style>
